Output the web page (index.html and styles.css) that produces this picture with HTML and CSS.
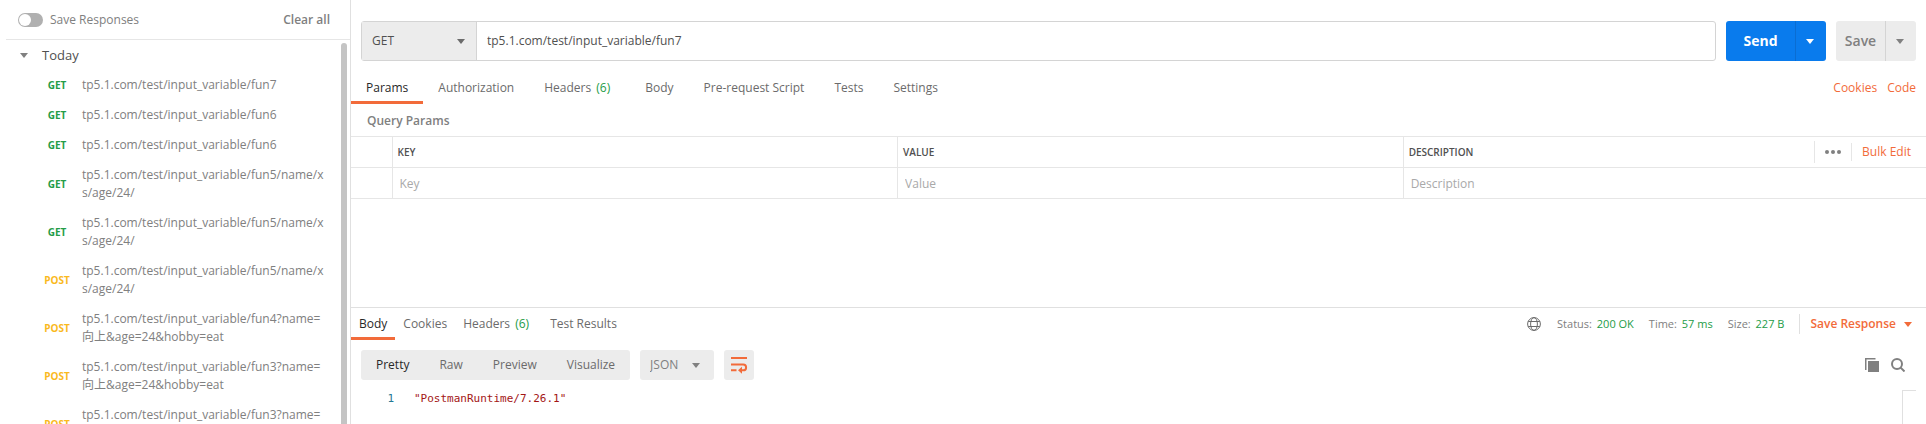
FILE: index.html
```html
<!DOCTYPE html>
<html lang="en">
<head>
<meta charset="utf-8">
<title>tp5.1.com/test/input_variable/fun7</title>
<link rel="stylesheet" href="styles.css">
</head>
<body>
<div class="app">
  <aside class="sidebar">
    <header class="sidebar-head">
      <label class="toggle"><input type="checkbox" class="toggle-input">Save Responses</label>
      <button class="clear-all" type="button">Clear all</button>
    </header>
    <div class="history">
      <div class="history-list">
        <button class="group" type="button"><svg class="caret" viewBox="0 0 8 5"><path d="M0 0h8L4 5z"/></svg>Today</button>
        <ul class="requests">
          <li class="request"><span class="method get">GET</span><a class="url" href="#">tp5.1.com/test/input_variable/fun7</a></li>
          <li class="request"><span class="method get">GET</span><a class="url" href="#">tp5.1.com/test/input_variable/fun6</a></li>
          <li class="request"><span class="method get">GET</span><a class="url" href="#">tp5.1.com/test/input_variable/fun6</a></li>
          <li class="request"><span class="method get">GET</span><a class="url" href="#">tp5.1.com/test/input_variable/fun5/name/xs/age/24/</a></li>
          <li class="request"><span class="method get">GET</span><a class="url" href="#">tp5.1.com/test/input_variable/fun5/name/xs/age/24/</a></li>
          <li class="request"><span class="method post">POST</span><a class="url" href="#">tp5.1.com/test/input_variable/fun5/name/xs/age/24/</a></li>
          <li class="request"><span class="method post">POST</span><a class="url" href="#">tp5.1.com/test/input_variable/fun4?name=向上&amp;age=24&amp;hobby=eat</a></li>
          <li class="request"><span class="method post">POST</span><a class="url" href="#">tp5.1.com/test/input_variable/fun3?name=向上&amp;age=24&amp;hobby=eat</a></li>
          <li class="request"><span class="method post">POST</span><a class="url" href="#">tp5.1.com/test/input_variable/fun3?name=向上&amp;age=24&amp;hobby=eat</a></li>
        </ul>
      </div>
      <div class="scroll-thumb"></div>
    </div>
  </aside>

  <main class="main">
    <section class="builder">
      <form class="request-bar">
        <div class="url-box">
          <div class="method-pick">
            <select class="method-select" aria-label="Method"><option>GET</option><option>POST</option></select>
            <svg class="caret" viewBox="0 0 8 5"><path d="M0 0h8L4 5z"/></svg>
          </div>
          <input class="url-input" type="text" aria-label="Request URL" value="tp5.1.com/test/input_variable/fun7">
        </div>
        <div class="split send">
          <button class="split-main" type="button">Send</button>
          <button class="split-more" type="button" aria-label="Send options"><svg class="caret" viewBox="0 0 8 5"><path d="M0 0h8L4 5z"/></svg></button>
        </div>
        <div class="split save">
          <button class="split-main" type="button">Save</button>
          <button class="split-more" type="button" aria-label="Save options"><svg class="caret" viewBox="0 0 8 5"><path d="M0 0h8L4 5z"/></svg></button>
        </div>
      </form>

      <nav class="tabs">
        <button class="tab active" type="button">Params</button>
        <button class="tab" type="button">Authorization</button>
        <button class="tab headers" type="button">Headers <span class="count">(6)</span></button>
        <button class="tab" type="button">Body</button>
        <button class="tab" type="button">Pre-request Script</button>
        <button class="tab" type="button">Tests</button>
        <button class="tab" type="button">Settings</button>
        <div class="tab-links"><a href="#">Cookies</a><a href="#">Code</a></div>
      </nav>

      <h2 class="params-title">Query Params</h2>
      <table class="params">
        <colgroup><col class="col-check"><col class="col-key"><col class="col-value"><col></colgroup>
        <thead>
          <tr>
            <th></th><th>KEY</th><th>VALUE</th>
            <th>
              <div class="desc-head">DESCRIPTION
                <div class="table-tools">
                  <button class="more" type="button" aria-label="More"><svg class="dots" viewBox="0 0 16 4"><circle cx="2" cy="2" r="2"/><circle cx="8" cy="2" r="2"/><circle cx="14" cy="2" r="2"/></svg></button>
                  <button class="bulk" type="button">Bulk Edit</button>
                </div>
              </div>
            </th>
          </tr>
        </thead>
        <tbody>
          <tr>
            <td></td>
            <td><input class="cell" type="text" aria-label="Key" placeholder="Key"></td>
            <td><input class="cell" type="text" aria-label="Value" placeholder="Value"></td>
            <td><input class="cell" type="text" aria-label="Description" placeholder="Description"></td>
          </tr>
        </tbody>
      </table>
    </section>

    <section class="response">
      <header class="response-head">
        <nav class="res-tabs">
          <button class="res-tab active" type="button">Body</button>
          <button class="res-tab" type="button">Cookies</button>
          <button class="res-tab res-headers" type="button">Headers <span class="count">(6)</span></button>
          <button class="res-tab" type="button">Test Results</button>
        </nav>
        <div class="status">
          <svg class="globe" viewBox="0 0 14 14"><circle cx="7" cy="7" r="6.4"/><ellipse cx="7" cy="7" rx="3.4" ry="6.4"/><path d="M1.2 4.5h11.6M1.2 9.5h11.6"/></svg>
          <span class="stat">Status: <b>200 OK</b></span>
          <span class="stat">Time: <b>57 ms</b></span>
          <span class="stat">Size: <b>227 B</b></span>
          <button class="save-response" type="button">Save Response<svg class="caret" viewBox="0 0 8 5"><path d="M0 0h8L4 5z"/></svg></button>
        </div>
      </header>

      <div class="viewer-bar">
        <div class="views">
          <button class="view active" type="button">Pretty</button>
          <button class="view" type="button">Raw</button>
          <button class="view" type="button">Preview</button>
          <button class="view" type="button">Visualize</button>
        </div>
        <div class="format">
          <select class="format-select" aria-label="Format"><option>JSON</option><option>XML</option></select>
          <svg class="caret" viewBox="0 0 8 5"><path d="M0 0h8L4 5z"/></svg>
        </div>
        <button class="wrap" type="button" aria-label="Wrap lines"><svg class="wrap-icon" viewBox="0 0 16 16"><path d="M0 1h16M0 7.500h12.200a2.900 2.900 0 0 1 0 5.800H10M0 13.300h5.500"/><path class="solid" d="M11 9.800v7L7 13.300z"/></svg></button>
        <div class="viewer-tools">
          <button class="tool" type="button" aria-label="Copy"><svg viewBox="0 0 14 14"><path class="solid" d="M3 3h11v11H3z"/><path class="edge" d="M.75 12V.75H10.500"/></svg></button>
          <button class="tool" type="button" aria-label="Search"><svg viewBox="0 0 14 14"><circle cx="6" cy="6" r="5"/><path d="M9.600 9.600l3.900 3.900"/></svg></button>
        </div>
      </div>

      <div class="editor">
        <span class="line-no">1</span>
        <code class="code">"PostmanRuntime/7.26.1"</code>
        <div class="minimap"></div>
      </div>
    </section>
  </main>
</div>
</body>
</html>
```
FILE: styles.css
```css
* { box-sizing: border-box; }

body {
  margin: 0;
  background: #fff;
  color: #808080;
  font: 12px/18px "Open Sans", "Noto Sans CJK SC", sans-serif;
}

button, input, select {
  margin: 0;
  padding: 0;
  border: 0;
  border-radius: 0;
  background: none;
  color: inherit;
  font: inherit;
  outline: none;
  appearance: none;
}

a { color: inherit; text-decoration: none; }

.caret {
  width: 8px;
  height: 5px;
  flex: none;
  fill: currentColor;
}

.app { display: flex; height: 100vh; overflow: hidden; }

/* History sidebar */
.sidebar {
  display: flex;
  flex-direction: column;
  flex: none;
  width: 351px;
  padding-left: 6px;
  border-right: 1px solid #e0e0e0;
}

.sidebar-head {
  display: flex;
  align-items: center;
  justify-content: space-between;
  flex: none;
  height: 40px;
  padding: 0 20px 0 12px;
  border-bottom: 1px solid #e6e6e6;
}

.toggle { display: flex; align-items: center; gap: 7px; }

.toggle-input {
  width: 25px;
  height: 14px;
  padding: 1px;
  border-radius: 7px;
  background: #b0b0b0;
}

.toggle-input::before {
  content: "";
  display: block;
  width: 12px;
  height: 12px;
  border-radius: 6px;
  background: #fff;
}

.clear-all { font-weight: 600; }

.history { display: flex; flex: 1; min-height: 0; padding-right: 3px; }
.history-list { flex: 1; min-width: 0; }

.scroll-thumb {
  width: 6px;
  margin-top: 3px;
  border-radius: 3px 3px 0 0;
  background: #c4c4c4;
}

.group {
  display: flex;
  align-items: center;
  gap: 14px;
  height: 30px;
  padding-left: 14px;
  color: #505050;
  font-size: 13px;
}

.group .caret { color: #808080; }

.requests { margin: 0; padding: 0; list-style: none; }

.request {
  display: grid;
  grid-template-columns: 30px 1fr;
  column-gap: 10px;
  align-items: center;
  padding: 6px 13px 6px 36px;
}

.method { font-size: 10px; font-weight: 700; text-align: center; }
.get { color: #249c47; }
.post { color: #fab91e; }
.url { word-break: break-all; }

/* Request builder */
.main { display: flex; flex-direction: column; flex: 1; min-width: 0; }
.builder { flex: none; height: 307px; }
.request-bar { display: flex; gap: 10px; padding: 21px 10px 0; }

.url-box {
  display: flex;
  flex: 1;
  height: 40px;
  border: 1px solid #d4d4d4;
  border-radius: 3px;
}

.method-pick, .format { display: grid; align-items: center; background: #ececec; }

.method-pick {
  width: 115px;
  border-right: 1px solid #d4d4d4;
}

.method-pick > *, .format > * { grid-area: 1 / 1; }
.method-pick .caret { justify-self: end; margin-right: 11px; color: #6b6b6b; pointer-events: none; }

.method-select {
  width: 100%;
  height: 38px;
  padding-left: 10px;
  color: #505050;
}

.url-input { flex: 1; padding: 0 10px; color: #505050; }

.split {
  display: flex;
  height: 40px;
  border-radius: 3px;
  font-size: 14px;
  font-weight: 600;
  overflow: hidden;
}

.split-main { flex: 1; }

.split-more {
  display: flex;
  align-items: center;
  justify-content: center;
  width: 31px;
  padding-right: 2px;
  border-left: 1px solid #d4d4d4;
}

.send { width: 100px; background: #097bed; color: #fff; font-weight: 700; }
.send .split-more { border-color: #0a6dd2; }
.save { width: 80px; background: #ececec; }

.tabs { display: flex; height: 43px; }

.tab {
  padding: 18px 15px 4px;
  border-bottom: 3px solid transparent;
  white-space: nowrap;
}

.tab, .res-tab { color: #6b6b6b; }
.tab.active, .res-tab.active { border-color: #f26b3a; color: #282828; }
.headers { margin-right: 5px; }
.count { margin-left: 2px; color: #249c47; }

.tab-links {
  display: flex;
  gap: 10px;
  margin-left: auto;
  padding: 18px 10px 0 0;
  color: #f26b3a;
}

.params-title {
  margin: 0;
  padding: 8px 16px 6px;
  font-size: 12px;
  font-weight: 600;
}

.params { width: 100%; table-layout: fixed; border-collapse: collapse; }
.col-check { width: 41px; }
.col-key, .col-value { width: 32.1%; }

.params th, .params td {
  height: 31px;
  padding: 0;
  border-top: 1px solid #e6e6e6;
  border-bottom: 1px solid #e6e6e6;
  border-left: 1px solid #e6e6e6;
  text-align: left;
}

.params th:first-child, .params td:first-child { border-left: 0; }
.params th { padding-left: 5px; color: #505050; font-size: 10px; font-weight: 600; }

.desc-head { display: flex; align-items: center; justify-content: space-between; }
.table-tools { display: flex; align-items: center; color: #808080; font-size: 12px; font-weight: 400; }

.more {
  display: flex;
  align-items: center;
  width: 37px;
  height: 22px;
  padding-left: 10px;
  border-left: 1px solid #e6e6e6;
}

.dots { width: 16px; height: 4px; fill: #808080; }

.bulk {
  padding: 0 15px 0 10px;
  border-left: 1px solid #e6e6e6;
  color: #f26b3a;
}

.cell { display: block; width: 100%; height: 30px; padding: 0 7px; color: #505050; }
.cell::placeholder { color: #a9a9a9; opacity: 1; }

/* Response */
.response {
  display: flex;
  flex-direction: column;
  flex: 1;
  border-top: 1px solid #e0e0e0;
}

.response-head { display: flex; justify-content: space-between; height: 32px; }
.res-tabs { display: flex; }
.res-tab { padding: 7px 8px 4px; border-bottom: 3px solid transparent; white-space: nowrap; }
.res-headers { margin-right: 5px; }

.status { display: flex; align-items: center; gap: 15px; padding-right: 14px; font-size: 11px; }
.globe { width: 14px; height: 14px; margin-right: 1px; fill: none; stroke: #6b6b6b; }
.stat b { margin-left: 2px; color: #249c47; font-weight: 400; }

.save-response {
  display: flex;
  align-items: center;
  gap: 8px;
  height: 20px;
  padding-left: 10px;
  border-left: 1px solid #e0e0e0;
  color: #f26b3a;
  font-size: 12px;
  font-weight: 600;
}

.viewer-bar { display: flex; gap: 10px; padding: 10px 21px 10px 10px; }
.views { display: flex; height: 30px; border-radius: 3px; background: #ececec; }
.view { padding: 0 15px; color: #6b6b6b; }
.view.active { color: #282828; }

.format { width: 74px; height: 30px; border-radius: 3px; }
.format-select { width: 100%; padding-left: 10px; }
.format .caret { justify-self: end; margin-right: 14px; pointer-events: none; }

.wrap {
  display: flex;
  align-items: center;
  justify-content: center;
  width: 30px;
  border-radius: 3px;
  background: #ececec;
}

.wrap-icon { width: 16px; height: 16px; overflow: visible; fill: none; stroke: #f26b3a; stroke-width: 2; }
.wrap-icon .solid { fill: #f26b3a; stroke: none; }

.viewer-tools { display: flex; align-items: center; gap: 12px; margin-left: auto; }
.tool { width: 14px; height: 14px; }
.tool svg { display: block; width: 14px; height: 14px; fill: none; stroke: #808080; stroke-width: 2; }
.tool .solid { fill: #808080; stroke: none; }
.tool .edge { stroke-width: 1.5; }

.editor {
  display: flex;
  flex: 1;
  margin-right: 10px;
  font: 11px/18px "DejaVu Sans Mono", monospace;
}

.line-no { width: 43px; color: #237893; text-align: right; }
.code { flex: 1; padding-left: 20px; color: #a31515; font: inherit; }
.minimap { width: 14px; border-top: 1px solid #e0e0e0; border-left: 1px solid #e0e0e0; }
```
